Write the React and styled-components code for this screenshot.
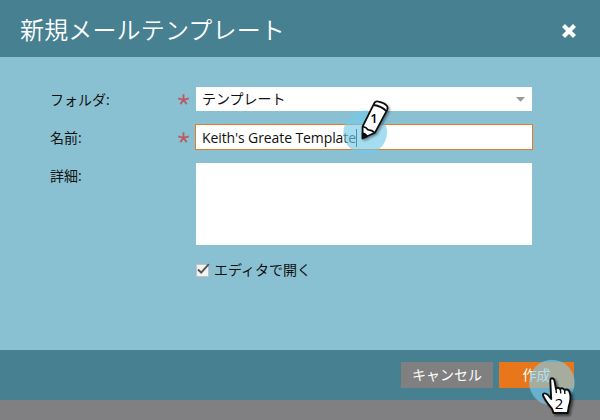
import React from "react";
import styled, { createGlobalStyle } from "styled-components";

const GlobalStyle = createGlobalStyle`
  * { box-sizing: border-box; }
  body {
    margin: 0;
    overflow: hidden;
    background: #808082;
    font-family: "Open Sans", "Noto Sans CJK JP", sans-serif;
  }
`;

const Dialog = styled.main`
  position: relative;
  width: 600px;
  height: 420px;
  display: flex;
  flex-direction: column;
  background: #808082;
  color: #111;
  font-size: 14px;
`;

const Header = styled.header`
  height: 57px;
  padding: 1px 23px 0 20px;
  display: flex;
  align-items: center;
  justify-content: space-between;
  background: #468091;
`;

const Title = styled.h1`
  margin: 0;
  color: #fff;
  font: 350 24px/36px "Noto Sans CJK JP", sans-serif;
  letter-spacing: 0.15px;
  white-space: nowrap;
`;

const CloseButton = styled.button`
  width: 16px;
  height: 16px;
  margin-top: 4px;
  padding: 0;
  border: 0;
  background: none;
  svg { display: block; }
`;

const Form = styled.div`
  height: 293px;
  padding: 30px 67px 0 50px;
  background: #89c1d2;
`;

const Row = styled.div`
  display: grid;
  grid-template-columns: 127px 19px 1fr;
  height: 38px;
  align-items: start;
`;

const Label = styled.label`
  padding-top: 1px;
  line-height: 24px;
  white-space: nowrap;
`;

const CheckLabel = styled.label`
  line-height: 24px;
  white-space: nowrap;
`;

const RequiredMark = styled.svg`
  width: 13px;
  height: 13px;
  margin-top: 6px;
`;

const SelectBox = styled.div`
  width: 336px;
  height: 24px;
  padding: 0 7px 0 6px;
  display: flex;
  align-items: center;
  justify-content: space-between;
  background: #fff;
`;

const SelectValue = styled.span`
  height: 24px;
  line-height: 24px;
`;

const TextInput = styled.div`
  width: 338px;
  height: 26px;
  margin: -1px 0 0 -1px;
  padding-left: 6px;
  border: 1px solid #ec7a20;
  background: #fff;
  line-height: 25px;
  letter-spacing: -0.1px;
  white-space: nowrap;
`;

const Caret = styled.span`
  display: inline-block;
  width: 1px;
  height: 18px;
  vertical-align: -4px;
  background: #222;
`;

const TextArea = styled.div`
  grid-column: 3;
  width: 336px;
  height: 82px;
  background: #fff;
`;

const CheckRow = styled.div`
  display: flex;
  align-items: center;
  gap: 4px;
  height: 24px;
  margin: 57px 0 0 146px;
`;

const Footer = styled.footer`
  height: 50px;
  padding: 12px 26px 0 0;
  display: flex;
  justify-content: flex-end;
  gap: 6px;
  background: #468091;
`;

const Button = styled.button`
  width: ${(p) => p.$width};
  height: 26px;
  padding: 0 0 2px;
  border: 0;
  background: ${(p) => (p.$primary ? "#e8771b" : "#808080")};
  color: #fff;
  font: 14px/24px "Noto Sans CJK JP", sans-serif;
  white-space: nowrap;
`;

const Callout = styled.svg`
  position: absolute;
  left: ${(p) => p.$left};
  top: ${(p) => p.$top};
  pointer-events: none;
  text { font: ${(p) => p.$digit} "Open Sans", sans-serif; fill: #000; text-anchor: middle; }
`;

const Required = () => (
  <RequiredMark viewBox="0 0 13 13">
    <path
      d="M6.5 6.8V1.2M6.5 6.8L1.2 5.4M6.5 6.8L11.8 5.4M6.5 6.8L3.4 11.1M6.5 6.8L9.6 11.1"
      stroke="#bd5a62"
      strokeWidth="1.8"
      fill="none"
    />
  </RequiredMark>
);

const PencilCallout = () => (
  <Callout $left="340px" $top="96px" $digit="600 13px" width="54" height="62" viewBox="340 96 54 62">
    <defs>
      <filter id="pencilShadow" x="-30%" y="-30%" width="170%" height="170%">
        <feDropShadow dx="1.5" dy="1.5" stdDeviation="1.2" floodOpacity=".4" />
      </filter>
    </defs>
    <circle cx="365.2" cy="132.4" r="21.8" fill="#73c9e8" fillOpacity=".65" />
    <g filter="url(#pencilShadow)" stroke="#111" strokeWidth="1.8" strokeLinejoin="round">
      <path
        d="M362.6 138.3L362.6 126.6L374.3 103.2Q375.5 100.9 378.5 101.6Q384.3 102.7 387 106Q388 107.5 387.2 109.8L375 132.7Z"
        fill="#fff"
      />
      <path d="M373.6 105Q381.7 106 386.3 111.2M362.9 126.6Q366.2 127 368 129.8Q371.8 129.6 374.6 132.7" fill="none" />
      <path d="M362.6 138.3L362.6 133.2Q365.8 133.6 367.2 136.3Z" fill="#111" />
    </g>
    <text x="374" y="123.2">1</text>
  </Callout>
);

const HandCallout = () => (
  <Callout $left="526px" $top="356px" $digit="15px" width="54" height="62" viewBox="526 356 54 62">
    <defs>
      <filter id="handShadow" x="-30%" y="-30%" width="170%" height="170%">
        <feDropShadow dx="2" dy="2" stdDeviation="1.3" floodOpacity=".5" />
      </filter>
    </defs>
    <circle cx="551.9" cy="382.6" r="22.8" fill="#7fcdec" fillOpacity=".63" />
    <path
      filter="url(#handShadow)"
      d="M551.2 399L550.3 380.2Q550.4 378.2 552 378.2Q553.8 378.2 554.4 380.4L555.9 388.6Q558 386.6 560.2 389Q562.6 387.2 564.6 390Q568.6 388 570 393.5Q571.4 399 568.9 406L567.7 413H553.6Q552.6 408.4 548.8 404.8Q545.7 401 543.2 396Q542.4 393.6 544.4 393.4Q547.3 393.3 551.2 399Z"
      fill="#fff"
      stroke="#111"
      strokeWidth="1.9"
      strokeLinejoin="round"
    />
    <path d="M555.9 388.4L556.4 393M560.3 389L560.8 393.4M564.6 390L564.9 394" stroke="#111" strokeWidth="1.4" />
    <text x="559" y="409">2</text>
  </Callout>
);

export default function App() {
  return (
    <>
      <GlobalStyle />
      <Dialog>
        <Header>
          <Title>新規メールテンプレート</Title>
          <CloseButton aria-label="閉じる">
            <svg width="16" height="16" viewBox="0 0 16 16">
              <path d="M2.5 2.5L13.5 13.5M13.5 2.5L2.5 13.5" stroke="#fff" strokeWidth="4.2" />
            </svg>
          </CloseButton>
        </Header>
        <Form>
          <Row>
            <Label>フォルダ:</Label>
            <Required />
            <SelectBox>
              <SelectValue>テンプレート</SelectValue>
              <svg width="9" height="5" viewBox="0 0 9 5">
                <path d="M0 0H9L4.5 4.8Z" fill="#999" />
              </svg>
            </SelectBox>
          </Row>
          <Row>
            <Label>名前:</Label>
            <Required />
            <TextInput>
              Keith's Greate Template
              <Caret />
            </TextInput>
          </Row>
          <Row>
            <Label>詳細:</Label>
            <TextArea />
          </Row>
          <CheckRow>
            <svg width="14" height="14" viewBox="0 0 14 14">
              <rect x=".5" y="1.5" width="12" height="12" fill="#f3f3f3" stroke="#c2c2c2" />
              <path d="M2 6.5L5.2 9.6L12.8 1.2" fill="none" stroke="#555" strokeWidth="2" />
            </svg>
            <CheckLabel>エディタで開く</CheckLabel>
          </CheckRow>
        </Form>
        <Footer>
          <Button $width="92px">キャンセル</Button>
          <Button $width="75px" $primary>作成</Button>
        </Footer>
        <PencilCallout />
        <HandCallout />
      </Dialog>
    </>
  );
}
